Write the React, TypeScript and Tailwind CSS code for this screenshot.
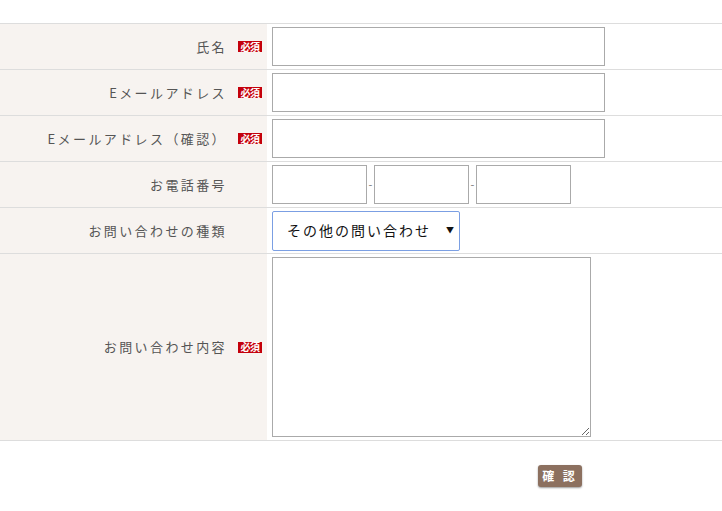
import React from "react";

const font = { fontFamily: '"Noto Sans CJK JP", "Noto Sans", sans-serif' };

function Badge() {
  return (
    <span className="ml-[11px] inline-flex h-[11px] w-[24px] items-center justify-center bg-[#c4000b] text-[10px] font-bold leading-none tracking-[-0.5px] text-white">
      必須
    </span>
  );
}

function Label({ text, req }: { text: string; req?: boolean }) {
  return (
    <div className="flex w-[267px] shrink-0 items-center justify-end bg-[#f7f3f0] pr-[5px]">
      <span className="text-[13px] tracking-[2.4px] text-[#555]">{text}</span>
      {req ? <Badge /> : <span className="w-[35px]" />}
    </div>
  );
}

export default function App() {
  return (
    <div className="min-h-[511px] w-[722px] bg-white" style={font}>
      <div className="h-[23px]" />
      <div className="border-b border-[#ddd]">
        <div className="flex h-[46px] border-t border-[#ddd]">
          <Label text="氏名" req />
          <div className="flex items-center pl-[5px]">
            <input className="h-[39px] w-[333px] border border-[#aaa] bg-white" />
          </div>
        </div>
        <div className="flex h-[46px] border-t border-[#ddd]">
          <Label text="Eメールアドレス" req />
          <div className="flex items-center pl-[5px]">
            <input className="h-[39px] w-[333px] border border-[#aaa] bg-white" />
          </div>
        </div>
        <div className="flex h-[46px] border-t border-[#ddd]">
          <Label text="Eメールアドレス（確認）" req />
          <div className="flex items-center pl-[5px]">
            <input className="h-[39px] w-[333px] border border-[#aaa] bg-white" />
          </div>
        </div>
        <div className="flex h-[46px] border-t border-[#ddd]">
          <Label text="お電話番号" />
          <div className="flex items-center pl-[5px] text-[11px] text-[#777]">
            <input className="h-[39px] w-[95px] border border-[#aaa] bg-white" />
            <span className="w-[7px] text-center">-</span>
            <input className="h-[39px] w-[95px] border border-[#aaa] bg-white" />
            <span className="w-[7px] text-center">-</span>
            <input className="h-[39px] w-[95px] border border-[#aaa] bg-white" />
          </div>
        </div>
        <div className="flex h-[46px] border-t border-[#ddd]">
          <Label text="お問い合わせの種類" />
          <div className="flex items-center pl-[5px]">
            <div className="relative flex h-[40px] w-[188px] items-center rounded-[2px] border border-[#7b9fe3] bg-white pl-[14px]">
              <span className="text-[14px] tracking-[2px] text-[#111]">その他の問い合わせ</span>
              <span className="absolute right-[5px] top-[12px] text-[8px] text-[#111]">▼</span>
            </div>
          </div>
        </div>
        <div className="flex h-[187px] border-t border-[#ddd]">
          <Label text="お問い合わせ内容" req />
          <div className="flex items-start pl-[5px] pt-[3px]">
            <textarea className="h-[180px] w-[319px] border border-[#aaa] bg-white" />
          </div>
        </div>
      </div>
      <div className="pl-[538px] pt-[24px]">
        <button className="flex h-[22px] w-[44px] items-center justify-center rounded-[3px] bg-[#8c705f] text-[12px] font-bold tracking-[3px] text-white shadow-[0_1px_2px_rgba(0,0,0,0.4)]">
          確 認
        </button>
      </div>
    </div>
  );
}
